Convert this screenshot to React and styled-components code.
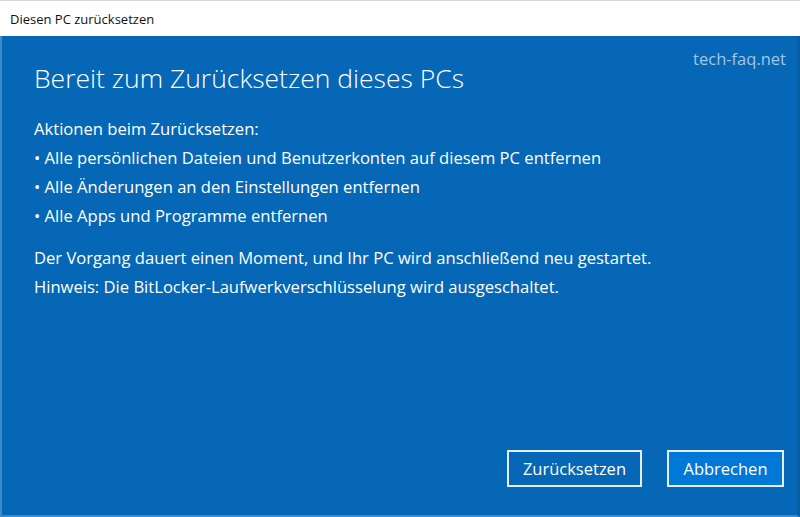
import React from 'react'
import styled, { createGlobalStyle } from 'styled-components'

const Global = createGlobalStyle`
  html, body { margin: 0; padding: 0; background: #fff; }
  body { font-family: "Open Sans", "Noto Sans", sans-serif; }
`

const App = () => {
  return (
    <>
      <Global />
      <Window>
        <TitleBar>Diesen PC zurücksetzen</TitleBar>
        <Body>
          <Watermark>tech-faq.net</Watermark>
          <Heading>Bereit zum Zurücksetzen dieses PCs</Heading>
          <Section>
            <Line>Aktionen beim Zurücksetzen:</Line>
            <Line>• Alle persönlichen Dateien und Benutzerkonten auf diesem PC entfernen</Line>
            <Line>• Alle Änderungen an den Einstellungen entfernen</Line>
            <Line>• Alle Apps und Programme entfernen</Line>
          </Section>
          <Section>
            <Line>Der Vorgang dauert einen Moment, und Ihr PC wird anschließend neu gestartet.</Line>
            <Line>Hinweis: Die BitLocker-Laufwerkverschlüsselung wird ausgeschaltet.</Line>
          </Section>
          <Actions>
            <Button>Zurücksetzen</Button>
            <Button primary>Abbrechen</Button>
          </Actions>
        </Body>
      </Window>
    </>
  )
}

const Window = styled.div`
  width: 800px;
  height: 517px;
  display: flex;
  flex-direction: column;
  overflow: hidden;
`

const TitleBar = styled.div`
  height: 36px;
  display: flex;
  align-items: center;
  padding-left: 10px;
  font-size: 13px;
  color: #111;
  background: #fff;
  border-top: 1px solid #d8d8d8;
  box-sizing: border-box;
`

const Body = styled.div`
  position: relative;
  flex: 1;
  background: #0567b5;
  border-left: 2px solid #3d8cc8;
  border-right: 3px solid #0a5da0;
  border-bottom: 2px solid #3a8acb;
  display: flex;
  flex-direction: column;
  padding: 20px 0 0 32px;
  color: #fff;
`

const Watermark = styled.div`
  position: absolute;
  top: 11px;
  right: 11px;
  font-size: 16.5px;
  color: #a4c6e2;
`

const Heading = styled.h1`
  margin: 0 0 14px;
  font-weight: 300;
  font-size: 26.5px;
  line-height: 44px;
`

const Section = styled.div`
  display: flex;
  flex-direction: column;
  margin-bottom: 13px;
`

const Line = styled.div`
  font-size: 16.6px;
  line-height: 29px;
`

const Actions = styled.div`
  margin-top: auto;
  display: flex;
  justify-content: flex-end;
  gap: 25px;
  padding: 0 13px 28px 0;
`

const Button = styled.button`
  height: 37px;
  padding: 0 14px;
  min-width: 117px;
  border: 2px solid #e8eef5;
  background: ${p => (p.primary ? '#0078d7' : 'transparent')};
  color: #fff;
  font-family: "Open Sans", "Noto Sans", sans-serif;
  font-size: 16.5px;
`

export default App
